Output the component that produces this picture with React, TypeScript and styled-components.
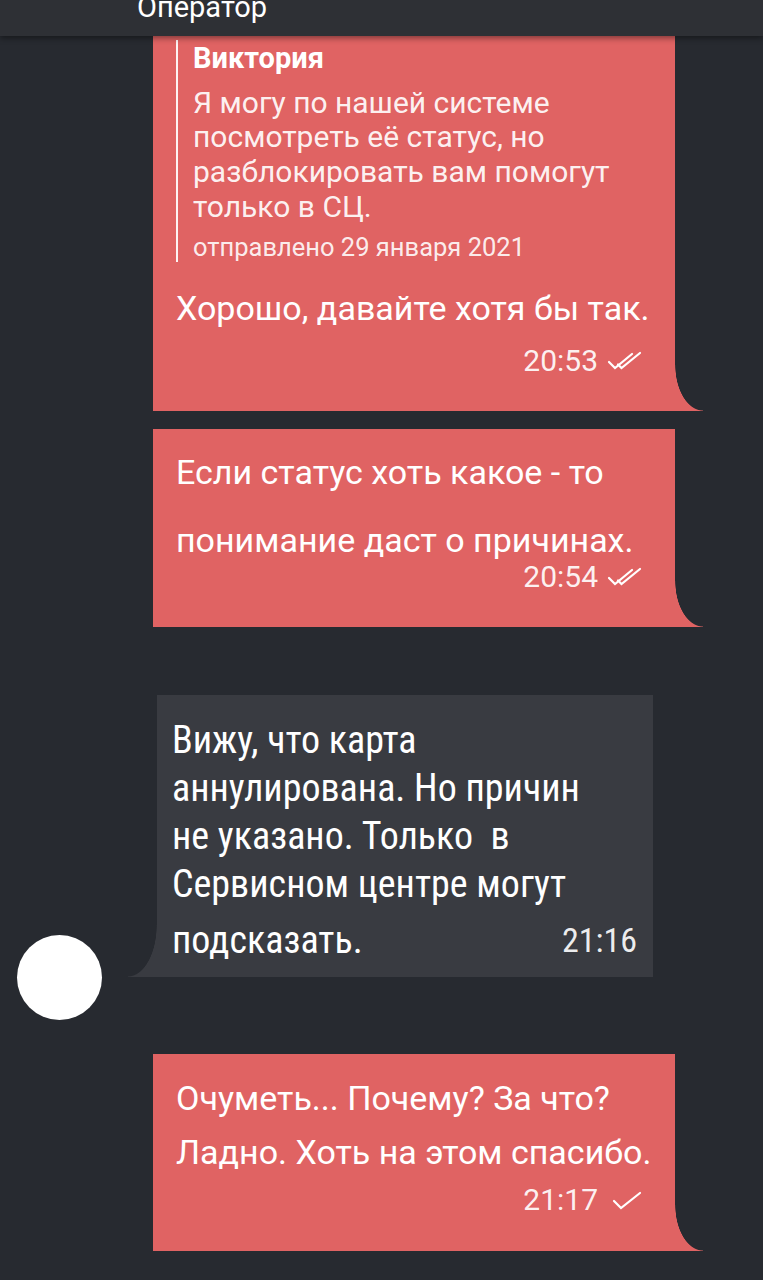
import React from 'react';
import styled, { createGlobalStyle } from 'styled-components';

const RED = '#e06363';
const GREY = '#393b41';
const BG = '#272a30';

const GlobalStyle = createGlobalStyle`
  html, body {
    margin: 0;
    padding: 0;
    background: ${BG};
  }
  body {
    font-family: Roboto, "Noto Sans", sans-serif;
    color: #ffffff;
  }
`;

const Screen = styled.div`
  width: 763px;
  height: 1280px;
  overflow: hidden;
  background: ${BG};
  display: flex;
  flex-direction: column;
`;

const TopBar = styled.header`
  height: 36px;
  flex-shrink: 0;
  background: #2e3035;
  box-shadow: 0 2px 6px rgba(0, 0, 0, 0.45);
  position: relative;
  z-index: 2;
  overflow: hidden;
  padding-left: 137px;
`;

const TopTitle = styled.div`
  font-size: 29px;
  line-height: 34px;
  margin-top: -10px;
`;

const Feed = styled.main`
  display: flex;
  flex-direction: column;
  align-items: flex-start;
`;

const OutBubble = styled.div<{ $top: number; $pad: string }>`
  position: relative;
  box-sizing: border-box;
  width: 522px;
  margin: ${p => p.$top}px 0 0 153px;
  padding: ${p => p.$pad};
  background: ${RED};

  &::after {
    content: '';
    position: absolute;
    right: -28px;
    bottom: 0;
    width: 28px;
    height: 46px;
    background: radial-gradient(28px 46px at 100% 0, transparent 98%, ${RED} 100%);
  }
`;

const Quote = styled.div`
  border-left: 2px solid rgba(255, 255, 255, 0.92);
  padding: 1px 0 0 15px;
`;

const QuoteName = styled.div`
  font-size: 29px;
  line-height: 34px;
  font-weight: 700;
`;

const QuoteText = styled.div`
  margin-top: 10.6px;
  font-size: 30px;
  line-height: 34.7px;
  white-space: pre;
  color: rgba(255, 255, 255, 0.93);
`;

const QuoteDate = styled.div`
  margin-top: 8px;
  font-size: 25.5px;
  line-height: 30px;
  color: rgba(255, 255, 255, 0.9);
`;

const MsgText = styled.div<{ $leading: number; $gap?: number }>`
  margin-top: ${p => p.$gap ?? 0}px;
  font-size: 34px;
  line-height: ${p => p.$leading}px;
  white-space: pre;
`;

const Meta = styled.div<{ $gap: number }>`
  display: flex;
  justify-content: flex-end;
  align-items: center;
  gap: 9px;
  margin-top: ${p => p.$gap}px;
  padding-right: 30px;
  font-size: 30px;
  line-height: 34px;
  color: rgba(255, 255, 255, 0.92);
`;

const Checks = styled.svg`
  width: 38px;
  height: 22px;
  flex-shrink: 0;
`;

const InRow = styled.div`
  display: flex;
  align-items: flex-end;
  margin-top: 68px;
  padding-left: 17px;
`;

const Avatar = styled.div`
  width: 85px;
  height: 85px;
  border-radius: 50%;
  background: #ffffff;
  flex-shrink: 0;
  margin-bottom: -43px;
`;

const InBubble = styled.div`
  position: relative;
  box-sizing: border-box;
  width: 496px;
  margin-left: 55px;
  padding: 21px 16px 13px 15px;
  background: ${GREY};
  font-family: "Roboto Condensed", "Liberation Sans Narrow", "Arial Narrow", Roboto, sans-serif;

  &::before {
    content: '';
    position: absolute;
    left: -29px;
    bottom: 0;
    width: 29px;
    height: 52px;
    background: radial-gradient(29px 52px at 0 0, transparent 98%, ${GREY} 100%);
  }
`;

const InText = styled.div`
  font-size: 38px;
  line-height: 48px;
  white-space: pre;
`;

const InFooter = styled.div`
  display: flex;
  justify-content: space-between;
  align-items: center;
  margin-top: 8px;
  font-size: 38px;
  line-height: 48px;
`;

const InTime = styled.span`
  font-size: 34px;
  color: rgba(255, 255, 255, 0.92);
`;

function CheckMark({ double }: { double?: boolean }) {
  return (
    <Checks viewBox="0 0 38 22" fill="none" stroke="#ffffff" strokeWidth="2.2" strokeLinecap="round">
      {double ? (
        <>
          <path d="M2 12 L8 18 L25 4" />
          <path d="M11 14.5 L14.5 18 L33 3" />
        </>
      ) : (
        <path d="M7 12 L14 19 L33 4" />
      )}
    </Checks>
  );
}

export default function App() {
  return (
    <Screen>
      <GlobalStyle />
      <TopBar>
        <TopTitle>Оператор</TopTitle>
      </TopBar>
      <Feed>
        <OutBubble $top={0} $pad="4px 0 33px 23px">
          <Quote>
            <QuoteName>Виктория</QuoteName>
            <QuoteText>
              {'Я могу по нашей системе\nпосмотреть её статус, но\nразблокировать вам помогут\nтолько в СЦ.'}
            </QuoteText>
            <QuoteDate>отправлено 29 января 2021</QuoteDate>
          </Quote>
          <MsgText $leading={40} $gap={26}>Хорошо, давайте хотя бы так.</MsgText>
          <Meta $gap={16}>
            <span>20:53</span>
            <CheckMark double />
          </Meta>
        </OutBubble>

        <OutBubble $top={18} $pad="9px 0 33px 23px">
          <MsgText $leading={68}>{'Если статус хоть какое - то\nпонимание даст о причинах.'}</MsgText>
          <Meta $gap={-14}>
            <span>20:54</span>
            <CheckMark double />
          </Meta>
        </OutBubble>

        <InRow>
          <Avatar />
          <InBubble>
            <InText>{'Вижу, что карта\nаннулирована. Но причин\nне указано. Только  в\nСервисном центре могут'}</InText>
            <InFooter>
              <span>подсказать.</span>
              <InTime>21:16</InTime>
            </InFooter>
          </InBubble>
        </InRow>

        <OutBubble $top={77} $pad="17px 0 34px 23px">
          <MsgText $leading={54}>{'Очуметь... Почему? За что?\nЛадно. Хоть на этом спасибо.'}</MsgText>
          <Meta $gap={4}>
            <span>21:17</span>
            <CheckMark />
          </Meta>
        </OutBubble>
      </Feed>
    </Screen>
  );
}
